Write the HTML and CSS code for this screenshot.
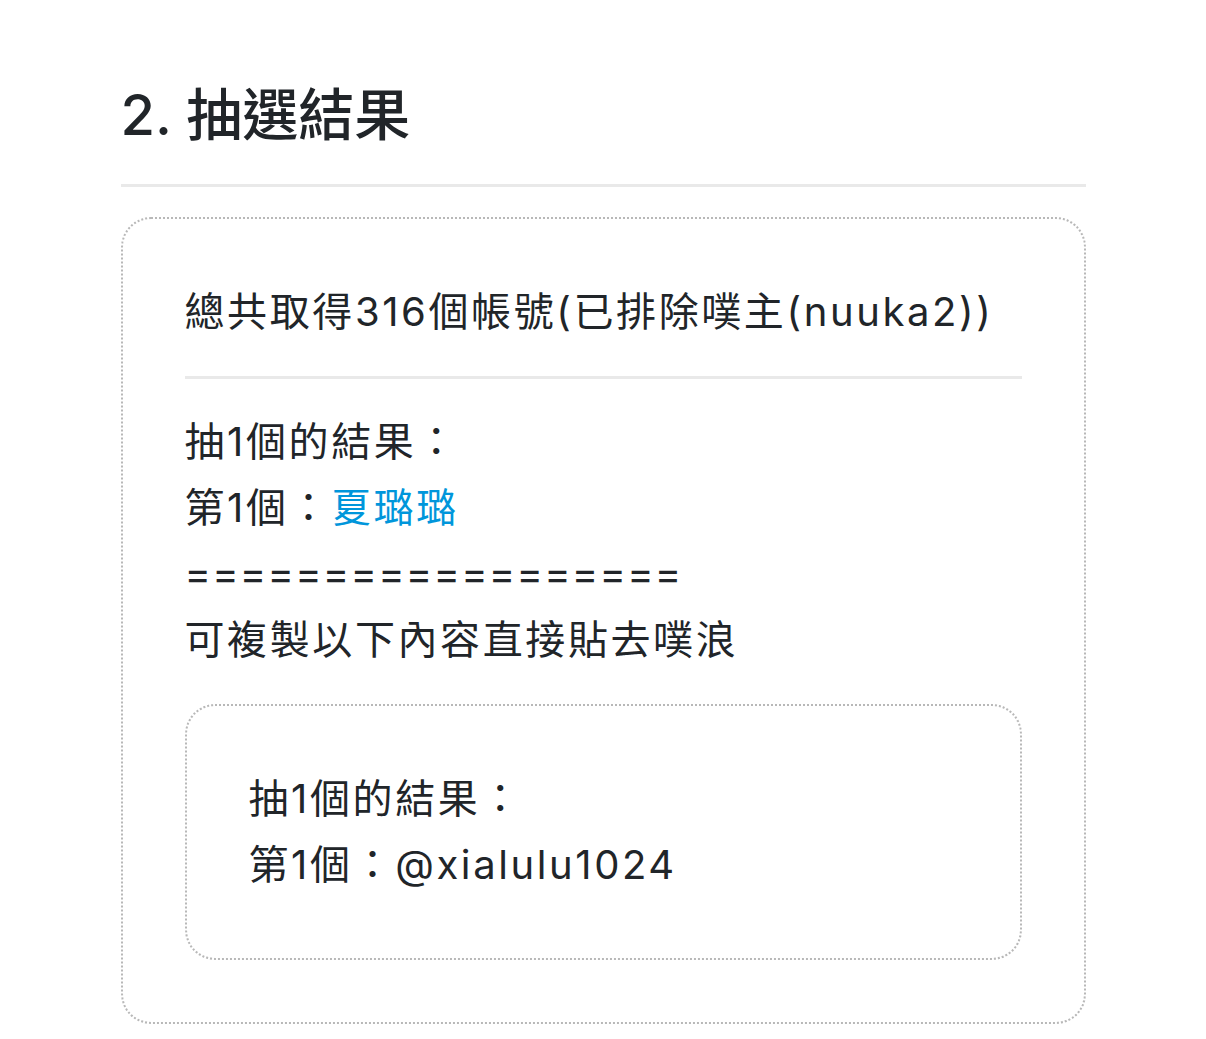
FILE: index.html
```html
<!DOCTYPE html>
<html lang="zh-Hant">
<head>
    <meta charset="UTF-8">
    <meta name="viewport" content="width=device-width, initial-scale=1.0">
    <title>抽選結果</title>
    <link rel="stylesheet" href="styles.css">
</head>
<body>

    <main class="page">
        <h2 class="section-title">2. 抽選結果</h2>

        <div class="result-box">
            <p class="summary">總共取得316個帳號(已排除噗主(nuuka2))</p>
            <hr class="divider">
            <div class="draw-text">
                抽1個的結果：<br>
                第1個：<a href="#" class="winner">夏璐璐</a><br>
                <span class="rule">==================</span><br>
                可複製以下內容直接貼去噗浪
            </div>
            <div class="copy-box">
                抽1個的結果：<br>
                第1個：@xialulu1024
            </div>
        </div>
    </main>

</body>
</html>
```

FILE: styles.css
```css
body {
    font-family: Inter, "Noto Sans CJK TC", sans-serif;
    background-color: #fff;
    color: #212529;
    margin: 0;
}
.page {
    max-width: 965px;
    margin: 0 auto;
    padding: 82px 0 15px;
}
.section-title {
    margin: 0;
    padding-bottom: 35px;
    font-size: 56px;
    line-height: 67px;
    font-weight: 500;
    border-bottom: 3px solid #e9e9e9;
}
.result-box {
    margin-top: 30px;
    padding: 60px 62px 62px;
    border: 2px dotted #b8b8b8;
    border-radius: 30px;
    font-size: 40px;
    line-height: 66px;
    letter-spacing: 2.6px;
}
.summary {
    margin: 0;
}
.divider {
    margin: 31px 0 30px;
    border: none;
    border-top: 3px solid #e9e9e9;
}
.winner {
    color: #0096db;
    text-decoration: none;
}
.rule {
    letter-spacing: 1.2px;
}
.copy-box {
    margin-top: 31px;
    padding: 60px 62px;
    border: 2px dotted #b8b8b8;
    border-radius: 30px;
}
```
